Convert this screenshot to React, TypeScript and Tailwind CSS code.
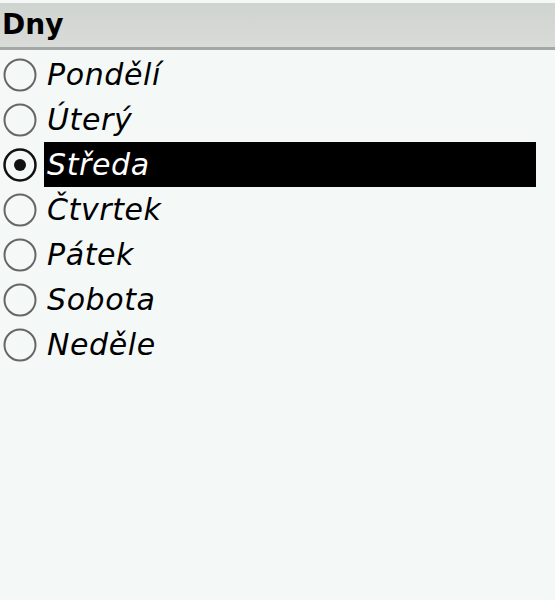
import React from "react";

const days = ["Pondělí", "Úterý", "Středa", "Čtvrtek", "Pátek", "Sobota", "Neděle"];
const selected = 2;

function Radio({ on }: { on: boolean }) {
  return (
    <svg width="35" height="36" viewBox="0 0 35 36" className="shrink-0">
      <circle cx="17" cy="18" r="15.5" fill="none" stroke={on ? "#111" : "#666"} strokeWidth={on ? 2.5 : 2} />
      {on && <circle cx="17" cy="18" r="6" fill="#111" />}
    </svg>
  );
}

export default function App() {
  return (
    <div className="w-[555px] h-[600px] bg-[#f4f8f6] pt-[3px] overflow-hidden" style={{ fontFamily: '"DejaVu Sans", sans-serif' }}>
      <div className="h-[47px] bg-gradient-to-b from-[#d0d4d1] to-[#d8dbd8] border-b-[3px] border-[#a3a8a4] flex items-center pl-[2px]">
        <span className="text-[28px] font-bold text-black leading-none">Dny</span>
      </div>
      <div className="pt-[2px] flex flex-col">
        {days.map((d, i) => (
          <div key={d} className="h-[45px] flex items-center pl-[3px]">
            <Radio on={i === selected} />
            <div
              className={`ml-[6px] h-[45px] w-[492px] flex items-center pl-[3px] italic text-[30px] leading-none tracking-[0.6px] ${
                i === selected ? "bg-black text-white" : "text-black"
              }`}
            >
              {d}
            </div>
          </div>
        ))}
      </div>
    </div>
  );
}
